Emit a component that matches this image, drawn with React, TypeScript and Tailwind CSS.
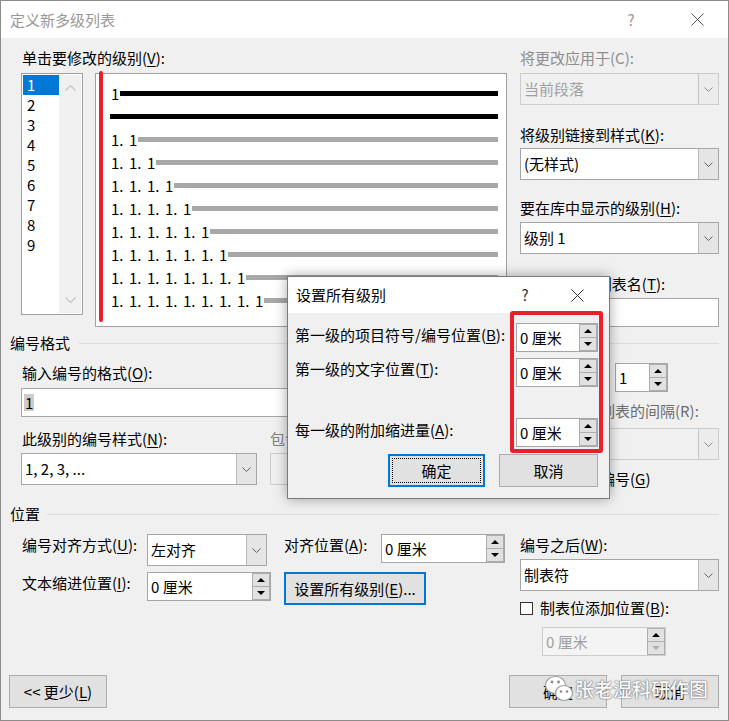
import type { ReactNode } from 'react';

// accelerator letter, e.g. (V)
function Acc({ k }: { k: string }) {
  return (
    <>
      (<span className="underline underline-offset-[2px]">{k}</span>)
    </>
  );
}

function Chevron({ color = '#606060' }: { color?: string }) {
  return (
    <svg width="9" height="5" viewBox="0 0 9 5">
      <path d="M0.5 0.5 L4.5 4.5 L8.5 0.5" fill="none" stroke={color} strokeWidth="1" />
    </svg>
  );
}

function ChevronUp({ color = '#c4c4c4' }: { color?: string }) {
  return (
    <svg width="11" height="6" viewBox="0 0 11 6">
      <path d="M0.5 5.5 L5.5 0.5 L10.5 5.5" fill="none" stroke={color} strokeWidth="1.2" />
    </svg>
  );
}

function ChevronDown({ color = '#c4c4c4' }: { color?: string }) {
  return (
    <svg width="11" height="6" viewBox="0 0 11 6">
      <path d="M0.5 0.5 L5.5 5.5 L10.5 0.5" fill="none" stroke={color} strokeWidth="1.2" />
    </svg>
  );
}

function Tri({ up = false, color = '#000' }: { up?: boolean; color?: string }) {
  return (
    <svg width="8" height="4" viewBox="0 0 8 4">
      <path d={up ? 'M0 4 L4 0 L8 4Z' : 'M0 0 L4 4 L8 0Z'} fill={color} />
    </svg>
  );
}

function Close({ color = '#444' }: { color?: string }) {
  return (
    <svg width="13" height="13" viewBox="0 0 13 13">
      <path d="M0.5 0.5 L12.5 12.5 M12.5 0.5 L0.5 12.5" stroke={color} strokeWidth="1" />
    </svg>
  );
}

function Combo({ text, className = '', disabled = false }: { text: string; className?: string; disabled?: boolean }) {
  return (
    <div
      className={`flex h-[32px] border ${
        disabled ? 'border-[#cccccc] bg-[#f0f0f0] text-[#a0a0a0]' : 'border-[#a6a6a6] bg-white'
      } ${className}`}
    >
      <div className="flex flex-1 items-center overflow-hidden whitespace-nowrap pl-[3px]">{text}</div>
      <div
        className={`flex w-[20px] items-center justify-center border-l ${
          disabled ? 'border-[#c4c4c4] bg-[#ececec]' : 'border-[#b9b9b9] bg-[#e5e5e5]'
        }`}
      >
        <Chevron color={disabled ? '#8a8a8a' : '#606060'} />
      </div>
    </div>
  );
}

function Spin({ text, className = '', disabled = false }: { text: string; className?: string; disabled?: boolean }) {
  return (
    <div
      className={`flex h-[29px] border ${
        disabled ? 'border-[#cccccc] bg-[#f4f4f4] text-[#a0a0a0]' : 'border-[#a6a6a6] bg-white'
      } ${className}`}
    >
      <div className="flex flex-1 items-center whitespace-nowrap pl-[3px]">{text}</div>
      <div className="flex w-[18px] flex-col">
        <div className="flex flex-1 items-center justify-center border border-[#adadad] bg-[#e1e1e1]">
          <Tri up />
        </div>
        <div className="flex flex-1 items-center justify-center border border-t-0 border-[#adadad] bg-[#e1e1e1]">
          <Tri color={disabled ? '#b0b0b0' : '#000'} />
        </div>
      </div>
    </div>
  );
}

function Button({ children, className = '', focused = false }: { children: ReactNode; className?: string; focused?: boolean }) {
  return (
    <div
      className={`relative flex h-[33px] items-center justify-center bg-[#e1e1e1] ${
        focused ? 'border-2 border-[#0078d7]' : 'border border-[#adadad]'
      } ${className}`}
    >
      {children}
    </div>
  );
}

function Header({ title, lineGap }: { title: string; lineGap: string }) {
  return (
    <div className="flex h-[20px] items-center">
      <span>{title}</span>
      <div className={`h-px flex-1 bg-[#dcdcdc] ${lineGap}`} />
    </div>
  );
}

function CheckBox({ disabled = false }: { disabled?: boolean }) {
  return (
    <div
      className={`h-[13px] w-[13px] shrink-0 border ${disabled ? 'border-[#bcbcbc] bg-[#f0f0f0]' : 'border-[#333] bg-white'}`}
    />
  );
}

function ListBox() {
  const levels = [1, 2, 3, 4, 5, 6, 7, 8, 9];
  return (
    <div className="flex h-[242px] w-[62px] border border-[#a0a0a0] bg-white p-px">
      <div className="flex w-[36px] flex-col">
        {levels.map((n) => (
          <div key={n} className={`h-[20px] pl-[4px] ${n === 1 ? 'bg-[#0078d7] text-white' : ''}`}>
            {n}
          </div>
        ))}
      </div>
      <div className="flex flex-1 flex-col items-center justify-between bg-[#f0f0f0] py-[10px]">
        <ChevronUp />
        <ChevronDown />
      </div>
    </div>
  );
}

function Preview() {
  const deep = [2, 3, 4, 5, 6, 7, 8, 9];
  return (
    <div className="relative ml-[12px] h-[254px] w-[412px] border border-[#a0a0a0] bg-white pl-[14px] pr-[8px] pt-[8px]">
      <div className="flex h-[23px] items-center">
        <span className="w-[10px] pl-px">1</span>
        <div className="h-[5px] flex-1 bg-black" />
      </div>
      <div className="flex h-[23px] items-center">
        <div className="h-[5px] flex-1 bg-black" />
      </div>
      {deep.map((n) => (
        <div key={n} className="flex h-[23px] items-center">
          {Array.from({ length: n - 1 }).map((_, i) => (
            <span key={i} className="w-[18px] shrink-0 pl-px">
              1.
            </span>
          ))}
          <span className="w-[10px] shrink-0 pl-px">1</span>
          <div className="h-[5px] flex-1 bg-[#a8a8a8]" />
        </div>
      ))}
      <div className="absolute left-[3px] top-[-3px] h-[251px] w-[4px] rounded-full bg-[#e8202a]" />
    </div>
  );
}

function SetAllLevels() {
  return (
    <div className="absolute left-[286px] top-[275px] h-[223px] w-[323px] border border-[#7a7a7a] bg-[#f0f0f0] shadow-[0_0_12px_rgba(0,0,0,0.35)]">
      <div className="flex h-[36px] items-center bg-white pl-[8px]">
        <span className="flex-1">设置所有级别</span>
        <span className="w-[20px] text-center text-[#333]">?</span>
        <div className="ml-[36px] mr-[25px] flex w-[13px] items-center">
          <Close color="#333" />
        </div>
      </div>
      <div className="flex flex-col pr-[11px]">
        <div className="mt-[10px] flex h-[29px] items-center">
          <span className="flex-1 pb-[5px] pl-[7px]">
            第一级的项目符号/编号位置<Acc k="B" />:
          </span>
          <Spin text="0 厘米" className="w-[82px]" />
        </div>
        <div className="mt-[6px] flex h-[29px] items-center">
          <span className="flex-1 pb-[8px] pl-[7px]">
            第一级的文字位置<Acc k="T" />:
          </span>
          <Spin text="0 厘米" className="w-[82px]" />
        </div>
        <div className="mt-[31px] flex h-[29px] items-center">
          <span className="flex-1 pb-[5px] pl-[7px]">
            每一级的附加缩进量<Acc k="A" />:
          </span>
          <Spin text="0 厘米" className="w-[82px]" />
        </div>
        <div className="mt-[7px] flex justify-end gap-[14px]">
          <Button focused className="h-[32px] w-[97px]">
            <div className="absolute inset-[2px] border border-dotted border-black" />
            确定
          </Button>
          <Button className="h-[32px] w-[99px]">取消</Button>
        </div>
      </div>
      <div className="absolute left-[222px] top-[34px] h-[142px] w-[93px] rounded-[3px] border-4 border-[#e8202a]" />
    </div>
  );
}

function Watermark() {
  return (
    <div className="absolute left-[543px] top-[674px] flex items-center">
      <svg width="30" height="27" viewBox="0 0 30 27">
        <ellipse cx="11.5" cy="10" rx="10" ry="8.5" fill="#fff" stroke="#a0a0a0" strokeWidth="1.2" />
        <circle cx="8" cy="7" r="1.4" fill="#8a8a8a" />
        <circle cx="14.5" cy="7" r="1.4" fill="#8a8a8a" />
        <ellipse cx="20" cy="18" rx="8.5" ry="7.5" fill="#fff" stroke="#a0a0a0" strokeWidth="1.2" />
        <circle cx="17" cy="16.5" r="1.2" fill="#8a8a8a" />
        <circle cx="23" cy="16.5" r="1.2" fill="#8a8a8a" />
      </svg>
      <span className="ml-[1px] text-[19px] font-medium leading-[24px] text-[#fbfbfb] [text-shadow:0_0_1px_#555,0_0_2px_#777]">
        张老湿科研作图
      </span>
    </div>
  );
}

export default function App() {
  return (
    <div className="relative h-[721px] w-[729px] overflow-hidden border border-[#8c8c8c] bg-[#f0f0f0] font-['Noto_Sans_CJK_SC',sans-serif] text-[15px] leading-[20px] text-black">
      <div className="flex h-[37px] items-center bg-white pl-[9px]">
        <span className="flex-1 text-[#999]">定义新多级列表</span>
        <span className="w-[20px] text-center text-[#999]">?</span>
        <div className="ml-[50px] mr-[24px] flex w-[13px] items-center">
          <Close color="#555" />
        </div>
      </div>

      <div className="flex flex-col px-[9px]">
        {/* level list, preview and style links */}
        <div className="mt-[10px] flex pl-[11px]">
          <div className="flex w-[486px] flex-col">
            <div className="h-[20px] pl-px">
              单击要修改的级别<Acc k="V" />:
            </div>
            <div className="mt-[5px] flex">
              <ListBox />
              <Preview />
            </div>
          </div>
          <div className="ml-auto flex w-[199px] flex-col">
            <div className="h-[20px] text-[#8e8e8e]">将更改应用于(C):</div>
            <Combo text="当前段落" disabled className="mt-[5px]" />
            <div className="mt-[20px] h-[20px]">
              将级别链接到样式<Acc k="K" />:
            </div>
            <Combo text="(无样式)" className="mt-[3px]" />
            <div className="mt-[18px] h-[20px]">
              要在库中显示的级别<Acc k="H" />:
            </div>
            <Combo text="级别 1" className="mt-[4px]" />
            <div className="mt-[20px] h-[20px] whitespace-nowrap">
              ListNum 域列表名<Acc k="T" />:
            </div>
            <div className="mt-[4px] h-[29px] border border-[#a6a6a6] bg-white" />
          </div>
        </div>

        <div className="mt-[6px]">
          <Header title="编号格式" lineGap="ml-[9px]" />
        </div>

        <div className="mt-[10px] flex pl-[11px]">
          <div className="flex w-[484px] flex-col">
            <div className="h-[20px] pl-px">
              输入编号的格式<Acc k="O" />:
            </div>
            <div className="mt-[5px] flex h-[29px] items-center border border-[#a6a6a6] bg-white pl-[2px]">
              <span className="bg-[#cccccc] px-px leading-[17px]">1</span>
            </div>
            <div className="mt-[12px] flex gap-[13px]">
              <div className="flex w-[236px] flex-col">
                <div className="h-[20px] pl-px">
                  此级别的编号样式<Acc k="N" />:
                </div>
                <Combo text="1, 2, 3, ..." className="mt-[4px]" />
              </div>
              <div className="flex w-[235px] flex-col">
                <div className="h-[20px] whitespace-nowrap text-[#808080]">包含的级别编号来自(D):</div>
                <Combo text="" disabled className="mt-[4px]" />
              </div>
            </div>
          </div>
          <div className="ml-auto flex w-[199px] flex-col">
            <div className="flex h-[29px] items-center">
              <span className="w-[95px]">
                起始编号<Acc k="S" />:
              </span>
              <Spin text="1" className="w-[53px]" />
            </div>
            <div className="mt-[9px] flex h-[20px] items-center whitespace-nowrap text-[#6d6d6d]">
              <CheckBox disabled />
              <span className="ml-[7px]">重新开始列表的间隔(R):</span>
            </div>
            <Combo text="" disabled className="mt-[7px]" />
            <div className="mt-[9px] flex h-[20px] items-center">
              <CheckBox />
              <span className="ml-[7px]">
                正规形式编号<Acc k="G" />
              </span>
            </div>
          </div>
        </div>

        <div className="mt-[15px]">
          <Header title="位置" lineGap="ml-[7px]" />
        </div>

        <div className="flex pl-[11px]">
          <div className="mt-[10px] flex w-[486px] flex-col">
            <div className="flex h-[32px] items-start">
              <span className="w-[126px] pl-px pt-px">
                编号对齐方式<Acc k="U" />:
              </span>
              <Combo text="左对齐" className="w-[120px]" />
              <span className="ml-[17px] w-[97px] pt-px">
                对齐位置<Acc k="A" />:
              </span>
              <Spin text="0 厘米" className="w-[124px]" />
            </div>
            <div className="mt-[6px] flex h-[33px] items-start">
              <span className="w-[126px] pl-px pt-px">
                文本缩进位置<Acc k="I" />:
              </span>
              <Spin text="0 厘米" className="w-[124px]" />
              <Button focused className="ml-[13px] w-[142px]">
                设置所有级别<Acc k="E" />...
              </Button>
            </div>
          </div>
          <div className="ml-auto mt-[11px] flex w-[199px] flex-col">
            <div className="h-[20px]">
              编号之后<Acc k="W" />:
            </div>
            <Combo text="制表符" className="mt-[4px]" />
            <div className="mt-[6px] flex h-[22px] items-center">
              <CheckBox />
              <span className="ml-[7px]">
                制表位添加位置<Acc k="B" />:
              </span>
            </div>
            <Spin text="0 厘米" disabled className="ml-[22px] mt-[8px] w-[124px]" />
          </div>
        </div>

        <div className="ml-[-1px] mt-[19px] flex">
          <Button className="w-[98px]">
            {'<< '}更少<Acc k="L" />
          </Button>
          <Button className="ml-auto w-[98px]">确定</Button>
          <Button className="ml-[14px] w-[98px]">取消</Button>
        </div>
      </div>

      <SetAllLevels />
      <Watermark />
    </div>
  );
}
